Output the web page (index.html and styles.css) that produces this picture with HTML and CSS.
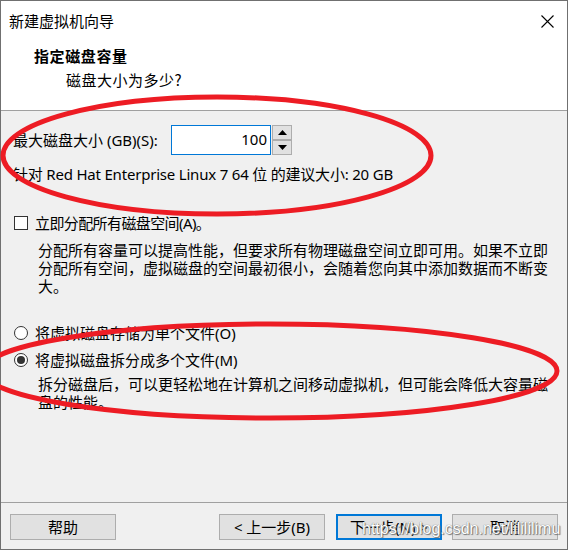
FILE: index.html
```html
<!DOCTYPE html>
<html lang="zh-CN">
<head>
<meta charset="utf-8">
<title>新建虚拟机向导</title>
<link rel="stylesheet" href="styles.css">
</head>
<body>
<div class="window">
  <div class="titlebar">
    <span class="title">新建虚拟机向导</span>
    <svg class="close" width="13" height="13" viewBox="0 0 13 13"><path d="M0.5 0.5 L12.5 12.5 M12.5 0.5 L0.5 12.5" stroke="#000" stroke-width="1.1" fill="none"/></svg>
  </div>
  <div class="header">
    <div class="h-title">指定磁盘容量</div>
    <div class="h-sub">磁盘大小为多少?</div>
  </div>
  <div class="body">
    <div class="size-row">
      <span class="size-label">最大磁盘大小 (GB)(S):</span>
      <div class="num-input">100</div>
      <div class="spin">
        <div class="spin-btn"><svg width="9" height="5" viewBox="0 0 9 5"><path d="M0 5 L4.5 0 L9 5 Z" fill="#000"/></svg></div>
        <div class="spin-btn"><svg width="9" height="5" viewBox="0 0 9 5"><path d="M0 0 L4.5 5 L9 0 Z" fill="#000"/></svg></div>
      </div>
    </div>
    <div class="rec">针对 Red Hat Enterprise Linux 7 64 位 的建议大小: 20 GB</div>
    <div class="opt-row check-row">
      <span class="checkbox"></span>
      <span class="opt-label tight">立即分配所有磁盘空间(A)。</span>
    </div>
    <p class="desc">分配所有容量可以提高性能，但要求所有物理磁盘空间立即可用。如果不立即<br>分配所有空间，虚拟磁盘的空间最初很小，会随着您向其中添加数据而不断变<br>大。</p>
    <div class="opt-row radio-row first-radio">
      <span class="radio"></span>
      <span class="opt-label">将虚拟磁盘存储为单个文件(O)</span>
    </div>
    <div class="opt-row radio-row">
      <span class="radio checked"></span>
      <span class="opt-label">将虚拟磁盘拆分成多个文件(M)</span>
    </div>
    <p class="desc desc2">拆分磁盘后，可以更轻松地在计算机之间移动虚拟机，但可能会降低大容量磁<br>盘的性能。</p>
  </div>
  <div class="footer">
    <div class="btn">帮助</div>
    <div class="spacer"></div>
    <div class="btn">&lt; 上一步(B)</div>
    <div class="btn primary">下一步(N) &gt;</div>
    <div class="btn">取消</div>
  </div>
</div>
<svg class="annot" width="570" height="551" viewBox="0 0 570 551">
  <ellipse cx="217" cy="155.5" rx="214" ry="58.5" fill="none" stroke="#ed1c24" stroke-width="5"/>
  <ellipse cx="270" cy="371" rx="287" ry="47" fill="none" stroke="#ed1c24" stroke-width="5"/>
</svg>
<div class="watermark">https://blog.csdn.net/lilililimu</div>
</body>
</html>
```
FILE: styles.css
```css
* { box-sizing: border-box; }
html, body {
  margin: 0;
  padding: 0;
  background: #ffffff;
}
body {
  width: 570px;
  height: 551px;
  position: relative;
  overflow: hidden;
  font-family: "Noto Sans", "Noto Sans CJK SC", sans-serif;
  font-size: 15px;
  color: #000;
}
.window {
  width: 568px;
  height: 550px;
  border: 1px solid #707070;
  background: #f0f0f0;
  display: flex;
  flex-direction: column;
}
.titlebar {
  height: 39px;
  background: #fff;
  display: flex;
  align-items: center;
  justify-content: space-between;
  padding: 0 13px 0 8px;
}
.title {
  font-family: "Noto Sans CJK SC", sans-serif;
  font-size: 15px;
  line-height: 20px;
}
.close { display: block; margin-top: 1px; }
.header {
  height: 71px;
  background: #fff;
  border-bottom: 1px solid #a0a0a0;
  padding: 6px 0 0 33px;
}
.h-title {
  font-family: "Noto Sans CJK SC", sans-serif;
  font-weight: bold;
  font-size: 15px;
  line-height: 20px;
  letter-spacing: 0.6px;
}
.h-sub {
  font-family: "Noto Sans CJK SC", sans-serif;
  font-size: 15px;
  line-height: 20px;
  margin: 4px 0 0 32px;
  letter-spacing: 0.5px;
}
.body {
  flex: 1;
  padding: 14px 0 0 12px;
}
.size-row {
  display: flex;
  align-items: center;
  height: 30px;
}
.size-label {
  width: 158px;
  line-height: 18px;
}
.num-input {
  width: 100px;
  height: 30px;
  background: #fff;
  border: 1px solid #0078d7;
  text-align: right;
  padding-right: 3px;
  line-height: 27px;
}
.spin {
  margin-left: 1px;
  display: flex;
  flex-direction: column;
}
.spin-btn {
  width: 20px;
  height: 15px;
  background: #e1e1e1;
  border: 1px solid #adadad;
  display: flex;
  align-items: center;
  justify-content: center;
}
.spin-btn svg { display: block; }
.rec {
  margin-top: 10px;
  line-height: 18px;
  letter-spacing: -0.2px;
}
.opt-row {
  display: flex;
  align-items: center;
  height: 18px;
}
.check-row { margin-top: 31px; }
.checkbox {
  width: 14px;
  height: 14px;
  border: 1px solid #333;
  background: #fff;
  margin-left: 1px;
}
.opt-label {
  margin-left: 7px;
  line-height: 18px;
}
.opt-label.tight { letter-spacing: -0.6px; }
.radio {
  width: 14px;
  height: 14px;
  border: 1px solid #333;
  border-radius: 50%;
  background: #fff;
  margin-left: 1px;
  display: flex;
  align-items: center;
  justify-content: center;
}
.radio.checked::after {
  content: "";
  width: 8px;
  height: 8px;
  border-radius: 50%;
  background: #333;
}
.desc {
  margin: 9px 0 0 25px;
  line-height: 18px;
  font-family: "Noto Sans CJK SC", sans-serif;
}
.first-radio { margin-top: 29px; }
.radio-row + .radio-row { margin-top: 9px; }
.desc2 { margin-top: 6px; }
.footer {
  height: 47px;
  border-top: 1px solid #a0a0a0;
  display: flex;
  align-items: flex-start;
  padding: 11px 9px 0 9px;
  gap: 10px;
}
.spacer { flex: 1; }
.btn {
  width: 106px;
  height: 26px;
  background: #e1e1e1;
  border: 1px solid #adadad;
  display: flex;
  align-items: center;
  justify-content: center;
  line-height: 18px;
}
.btn.primary {
  border: 2px solid #0078d7;
  margin-left: 1px;
}
.annot {
  position: absolute;
  left: 0;
  top: 0;
  pointer-events: none;
}
.watermark {
  position: absolute;
  left: 362px;
  top: 519px;
  font-family: "Liberation Sans", Arial, sans-serif;
  font-size: 16px;
  line-height: 20px;
  color: #fff;
  text-shadow: 0 0 1px #555, 1px 1px 1px #777;
}
```
